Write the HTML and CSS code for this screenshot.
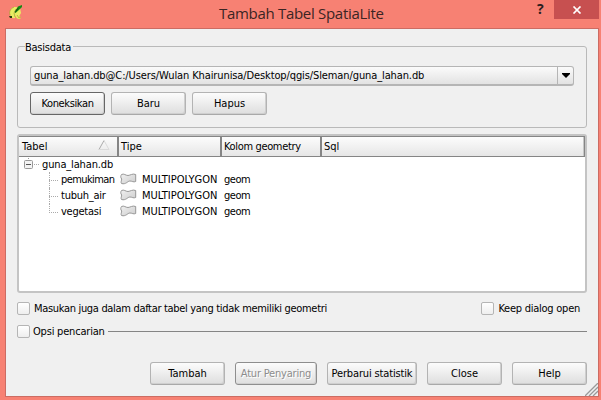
FILE: index.html
```html
<!DOCTYPE html>
<html lang="id">
<head>
<meta charset="utf-8">
<title>Tambah Tabel SpatiaLite</title>
<link rel="stylesheet" href="styles.css">
</head>
<body>
<svg width="0" height="0" class="defs">
  <defs>
    <linearGradient id="shade" x1="0" y1="0" x2="1" y2="1"><stop offset="0" stop-color="#f0f0f0"/><stop offset="1" stop-color="#cdcdcd"/></linearGradient>
    <symbol id="poly" viewBox="0 0 17 12"><path d="M1.500 1.500C4 .2 5.500 2.500 8 2.500C10.500 2.300 12.500 .2 15.700 1.500V8.500C13.500 9.500 12 8 10 8C7.500 8 6 11.800 1.500 10.500C.5 9 1.700 7.500 1.700 6C.5 4.500 .5 3 1.500 1.500Z" fill="url(#shade)" stroke="#979797"/></symbol>
  </defs>
</svg>
<div class="window">
  <header class="titlebar">
    <svg class="logo" width="14" height="16" viewBox="0 0 14 16">
      <path d="M5 2C2 3 .5 6 1 9C1.500 12 4 14 6 13L6 11L8 13.500L11 14L12 12L10 11.500L12 8L11 3L7 2Z" fill="#e8ed62"/>
      <path d="M5 2C1 4 0 7 1 10M7 4L5 8L6 12M8 10L10 13L12 12" fill="none" stroke="#b3a43b" stroke-width=".8"/>
      <path d="M13 0L9 1.500L5.500 7L6.500 8L11 4L13 2Z" fill="#168a16"/>
      <path d="M0 11H3V13H1ZM7 5L10 2L9 4L6 8Z" fill="#24400e"/>
    </svg>
    <h1 class="title">Tambah Tabel SpatiaLite</h1>
    <span class="hint">?</span>
    <span class="close"><svg width="10" height="8" viewBox="0 0 10 8"><path d="M1.500 .5L8.500 7.500M8.500 .5L1.500 7.500" stroke="#fff" stroke-width="1.700"/></svg></span>
  </header>
  <main class="client">
    <fieldset class="group">
      <legend><span class="t t-basis">Basisdata</span></legend>
      <div class="combo"><span class="t t-path">guna_lahan.db@C:/Users/Wulan Khairunisa/Desktop/qgis/Sleman/guna_lahan.db</span><span class="drop"><svg width="8" height="5" viewBox="0 0 8 5"><path d="M0 0H8V1L4 5L0 1Z"/></svg></span></div>
      <div class="actions">
        <button class="btn focus"><span class="t t-kon">Koneksikan</span></button>
        <button class="btn"><span class="t t-baru">Baru</span></button>
        <button class="btn"><span class="t t-hapus">Hapus</span></button>
      </div>
    </fieldset>
    <section class="tree">
      <div class="cols head">
        <div class="th"><span class="t t-tabel">Tabel</span><svg class="sort" width="12" height="10" viewBox="0 0 12 10"><path d="M1 9.500L6 .5" stroke="#aaa" fill="none"/><path d="M6 .5L11 9.500H1" stroke="#dadada" fill="none"/></svg></div>
        <div class="th"><span class="t t-tipe">Tipe</span></div>
        <div class="th"><span class="t t-kolom">Kolom geometry</span></div>
        <div class="th"><span class="t t-sql">Sql</span></div>
      </div>
      <div class="row root"><svg width="20" height="15" viewBox="0 0 20 15"><path d="M4.500 0V3" stroke="#999" stroke-dasharray="1 1"/><rect x=".5" y="2.500" width="8" height="8" rx="1" fill="#f4f4f4" stroke="#999"/><path d="M2 6.500H7" stroke="#555"/><path d="M10 6.500H15" stroke="#aaa" stroke-dasharray="1 1"/></svg><span class="t t-db">guna_lahan.db</span></div>
      <div class="cols row"><div class="name"><i class="branch"></i><span class="t t-pem">pemukiman</span></div><div class="type"><svg width="17" height="12"><use href="#poly"/></svg><span class="t t-multi">MULTIPOLYGON</span></div><div class="geom"><span class="t t-geom">geom</span></div></div>
      <div class="cols row"><div class="name"><i class="branch"></i><span class="t t-tub">tubuh_air</span></div><div class="type"><svg width="17" height="12"><use href="#poly"/></svg><span class="t t-multi">MULTIPOLYGON</span></div><div class="geom"><span class="t t-geom">geom</span></div></div>
      <div class="cols row"><div class="name"><i class="branch last"></i><span class="t t-veg">vegetasi</span></div><div class="type"><svg width="17" height="12"><use href="#poly"/></svg><span class="t t-multi">MULTIPOLYGON</span></div><div class="geom"><span class="t t-geom">geom</span></div></div>
    </section>
    <div class="checks">
      <label class="check"><i class="box"></i><span class="t t-mas">Masukan juga dalam daftar tabel yang tidak memiliki geometri</span></label>
      <label class="check keep"><i class="box"></i><span class="t t-keep">Keep dialog open</span></label>
    </div>
    <div class="search"><i class="box"></i><span class="t t-opsi">Opsi pencarian</span><i class="rule"></i></div>
    <footer class="buttons">
      <button class="btn"><span class="t t-tambah">Tambah</span></button>
      <button class="btn off"><span class="t t-atur">Atur Penyaring</span></button>
      <button class="btn wide"><span class="t t-perb">Perbarui statistik</span></button>
      <button class="btn"><span class="t t-close">Close</span></button>
      <button class="btn"><span class="t t-help">Help</span></button>
    </footer>
    <svg class="grip" width="13" height="13" viewBox="0 0 13 13"><path d="M0 13L13 0M4 13L13 4M8 13L13 8" stroke="#999" stroke-width="1.300"/></svg>
  </main>
</div>
</body>
</html>
```
FILE: styles.css
```css
* { box-sizing: border-box; }
body { margin: 0; width: 601px; height: 400px; overflow: hidden; font: 11px/16px "DejaVu Sans Condensed", "DejaVu Sans", sans-serif; font-stretch: condensed; color: #000; }
.defs { position: absolute; }
.window { width: 601px; height: 400px; background: #f78173; display: flex; flex-direction: column; padding: 0 2px 3px 5px; }
.titlebar { height: 28px; flex: none; display: flex; align-items: flex-start; }
.logo { margin: 5px 0 0 4px; flex: none; }
.title { flex: 1; margin: 1px 0 0 196px; font: 15px/24px "Open Sans", sans-serif; letter-spacing: -.3px; color: #3b2523; white-space: nowrap; }
.hint { font: bold 14px/18px "Open Sans", sans-serif; color: #2b1e1e; width: 17px; margin-left: 1px; }
.close { width: 45px; height: 19px; background: #c75050; display: flex; align-items: center; justify-content: center; }
.client { position: relative; flex: 1; background: #f0f0f0; border: 1px solid #cc6c63; padding: 11px 11px 0 11px; }
.t { white-space: nowrap; display: inline-block; flex: none; }
.t-basis, .t-tub, .t-veg { letter-spacing: -.25px; }
.t-path { letter-spacing: -.11px; }
.t-kon { letter-spacing: -.38px; }
.t-kolom { letter-spacing: -.35px; }
.t-pem { letter-spacing: -.6px; }
.t-db, .t-perb { letter-spacing: -.15px; }
.t-geom { letter-spacing: -.5px; }
.t-mas { letter-spacing: -.32px; }
.t-keep { letter-spacing: -.25px; }
.t-opsi, .t-atur { letter-spacing: -.2px; }
.group { margin: 0; height: 88px; border: 1px solid #b9b9b9; border-radius: 3px; padding: 13px 12px 0; min-width: 0; }
legend { padding: 0 2px 0 0; margin-left: -5px; height: 13px; line-height: 15px; }
.combo { height: 20px; border: 1px solid #b5b5b5; border-bottom-width: 2px; border-radius: 3px; background: linear-gradient(#fbfbfb, #e2e2e2); display: flex; align-items: center; padding-left: 3px; }
.drop { margin-left: auto; width: 16px; height: 17px; border-left: 1px solid #b5b5b5; display: flex; align-items: center; justify-content: center; }
.actions { display: flex; gap: 6px; margin-top: 6px; }
.btn { width: 75px; height: 23px; padding: 0; border: 1px solid #b3b3b3; border-bottom-color: #a9a9a9; border-radius: 3px; background: linear-gradient(#fcfcfc, #dedede); font: inherit; color: #000; display: flex; align-items: center; justify-content: center; box-shadow: inset -1px -1px #cfcfcf; }
.focus { border-color: #666; }
.off { width: 82px; color: #8c8c8c; border-color: #8e8e8e; text-shadow: 1px 1px #fff; }
.wide { width: 90px; }
.tree { margin-top: 6px; height: 159px; border: 2px solid #c4c4c4; border-radius: 3px; background: #fff; }
.cols { display: grid; grid-template-columns: 100px 103px 100px 1fr; }
.head { height: 21px; border: solid #858585; border-width: 1px 1px 1px 0; background: linear-gradient(#fcfcfc, #e6e6e6); }
.th { border-right: 2px solid #858585; padding: 1px 0 0 2px; display: flex; align-items: center; justify-content: space-between; }
.th:first-child { padding-left: 3px; }
.th:last-child { border-right: 1px solid #c6c6c6; }
.sort { margin: -5px 7px 0 0; }
.row { height: 16px; }
.root { display: flex; align-items: center; padding-left: 5px; margin-bottom: -1px; }
.root .t { margin-left: -2px; }
.name, .type, .geom { display: flex; align-items: center; }
.branch { width: 9px; height: 16px; margin: 0 3px 0 30px; border-left: 1px dotted #aaa; background: linear-gradient(90deg, transparent 50%, #aaa 50%) 0 8px / 2px 1px repeat-x; flex: none; }
.last { height: 9px; align-self: flex-start; }
.type svg { margin: -3px 5px 0 1px; flex: none; }
.geom { padding-left: 2px; }
.checks { display: flex; justify-content: space-between; margin-top: 9px; padding-right: 7px; }
.check { display: flex; align-items: center; gap: 4px; height: 13px; }
.box { width: 13px; height: 13px; border: 1px solid #b5b5b5; border-radius: 2px; background: linear-gradient(#fff, #eee); flex: none; }
.search { height: 13px; margin-top: 10px; display: flex; align-items: center; }
.search .t { margin-left: 3px; }
.rule { height: 1px; background: #858585; flex: 1; margin-left: 3px; }
.buttons { display: flex; gap: 10px; justify-content: flex-end; margin-top: 24px; }
.grip { position: absolute; right: 0; bottom: 0; }
```
